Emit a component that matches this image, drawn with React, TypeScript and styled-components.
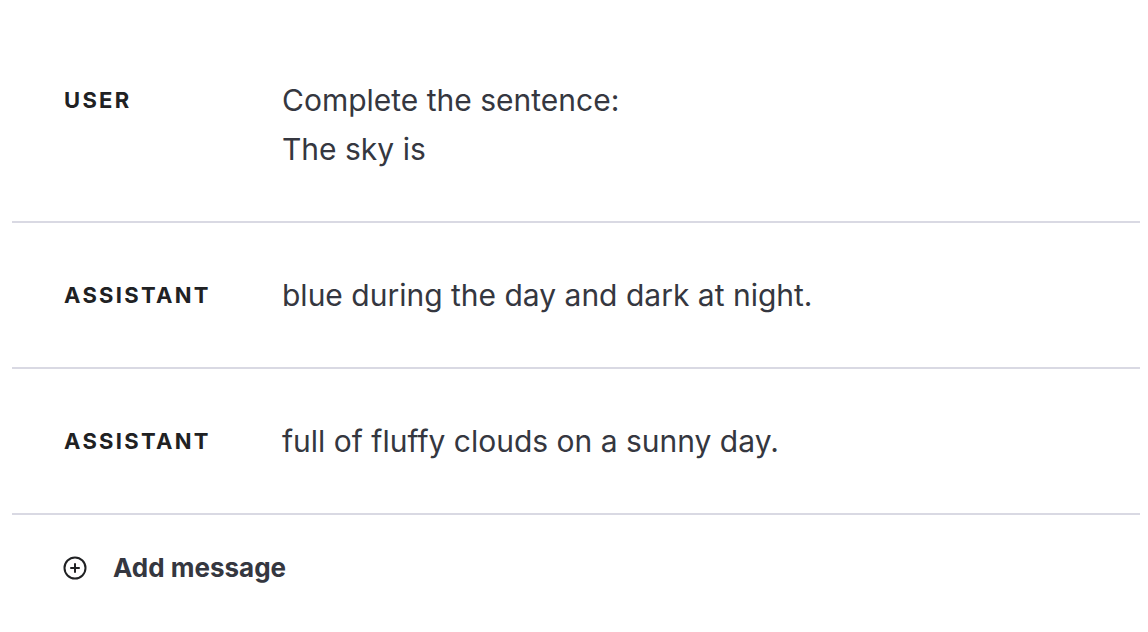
import React from "react";
import styled, { createGlobalStyle } from "styled-components";

const Global = createGlobalStyle`
  html, body { margin: 0; padding: 0; background: #ffffff; }
  body { font-family: Inter, "Noto Sans", sans-serif; -webkit-font-smoothing: antialiased; }
`;

const Page = styled.div`
  padding: 28px 8px 0 12px;
`;

const Row = styled.div`
  display: grid;
  grid-template-columns: 218px 1fr;
  padding: 48px 0 47px 52px;
  border-bottom: 2px solid #d9d9e3;
  align-items: start;
`;

const Role = styled.div`
  font-size: 22px;
  font-weight: 700;
  letter-spacing: 2.3px;
  text-transform: uppercase;
  color: #202123;
  line-height: 49px;
`;

const Content = styled.div`
  font-size: 30px;
  line-height: 49px;
  color: #353740;
  font-weight: 400;
  white-space: pre-wrap;
`;

const AddButton = styled.button`
  display: flex;
  align-items: center;
  gap: 26px;
  margin: 0;
  padding: 37px 0 0 51px;
  border: none;
  background: transparent;
  font-family: inherit;
  font-size: 26px;
  font-weight: 700;
  color: #353740;
  cursor: pointer;
`;

const messages = [
  { role: "user", text: "Complete the sentence:\nThe sky is" },
  { role: "assistant", text: "blue during the day and dark at night." },
  { role: "assistant", text: "full of fluffy clouds on a sunny day." },
];

const PlusCircle = () => (
  <svg width="24" height="24" viewBox="0 0 24 24" fill="none" stroke="#202123" strokeWidth="2" strokeLinecap="round">
    <circle cx="12" cy="12" r="10.5" />
    <line x1="12" y1="8" x2="12" y2="16" />
    <line x1="8" y1="12" x2="16" y2="12" />
  </svg>
);

export default function App() {
  return (
    <Page>
      <Global />
      {messages.map((m, i) => (
        <Row key={i}>
          <Role>{m.role}</Role>
          <Content>{m.text}</Content>
        </Row>
      ))}
      <AddButton>
        <PlusCircle />
        Add message
      </AddButton>
    </Page>
  );
}
